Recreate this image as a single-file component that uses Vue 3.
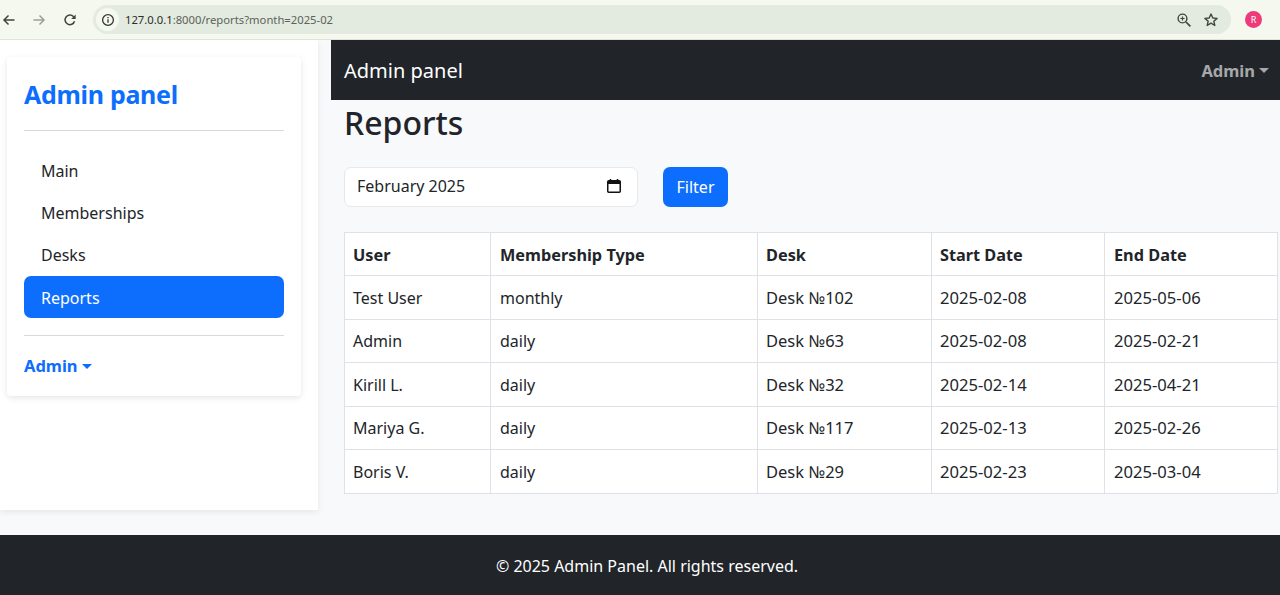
<script setup>
const links = ['Main', 'Memberships', 'Desks', 'Reports']
const rows = [
  ['Test User', 'monthly', 'Desk №102', '2025-02-08', '2025-05-06'],
  ['Admin', 'daily', 'Desk №63', '2025-02-08', '2025-02-21'],
  ['Kirill L.', 'daily', 'Desk №32', '2025-02-14', '2025-04-21'],
  ['Mariya G.', 'daily', 'Desk №117', '2025-02-13', '2025-02-26'],
  ['Boris V.', 'daily', 'Desk №29', '2025-02-23', '2025-03-04'],
]
const heads = ['User', 'Membership Type', 'Desk', 'Start Date', 'End Date']
</script>

<template>
  <div class="page">
    <header class="chrome">
      <svg class="nav-ic" width="14" height="14" viewBox="0 0 14 14"><path d="M12.500 7H2M6.500 2.500 2 7l4.500 4.500" fill="none" stroke="#3f4640" stroke-width="1.500"/></svg>
      <svg class="nav-ic fwd" width="14" height="14" viewBox="0 0 14 14"><path d="M1.500 7H12M7.500 2.500 12 7l-4.500 4.500" fill="none" stroke="#9aa09a" stroke-width="1.500"/></svg>
      <svg class="nav-ic reload" width="14" height="14" viewBox="0 0 14 14"><path d="M11.500 8.200A4.800 4.800 0 1 1 10.400 3.600L12 5.200" fill="none" stroke="#3f4640" stroke-width="1.500"/><path d="M12.600 1.500v4.400H8.200z" fill="#3f4640"/></svg>
      <div class="omnibox">
        <span class="info">
          <svg width="14" height="14" viewBox="0 0 14 14"><circle cx="7" cy="7" r="5.400" fill="none" stroke="#333" stroke-width="1.300"/><path d="M7 6.200v3.600M7 4v1.300" stroke="#333" stroke-width="1.300"/></svg>
        </span>
        <span class="url"><span class="host">127.0.0.1</span>:8000/reports?month=2025-02</span>
        <svg class="zoom-ic" width="16" height="16" viewBox="0 0 16 16"><circle cx="6.500" cy="6.500" r="4.400" fill="none" stroke="#3f4640" stroke-width="1.400"/><path d="M10 10l4.400 4.400" stroke="#3f4640" stroke-width="1.700"/><path d="M4.400 6.500h4.200M6.500 4.400v4.200" stroke="#3f4640" stroke-width="1.200"/></svg>
        <svg class="star-ic" width="16" height="16" viewBox="0 0 16 16"><path d="M8 2l1.800 4 4.300.4-3.300 2.800 1 4.300L8 11.200l-3.800 2.300 1-4.300-3.300-2.800L6.200 6z" fill="none" stroke="#3f4640" stroke-width="1.400" stroke-linejoin="round"/></svg>
      </div>
      <span class="avatar">R</span>
    </header>

    <div class="body">
      <aside class="sidebar">
        <div class="card">
          <h1 class="brand">Admin panel</h1>
          <hr class="rule" />
          <nav class="links">
            <a v-for="l in links" :key="l" class="link" :class="{ active: l === 'Reports' }">{{ l }}</a>
          </nav>
          <hr class="rule second" />
          <div class="user">Admin<i class="caret"></i></div>
        </div>
      </aside>

      <main class="main">
        <div class="topbar">
          <span class="topbrand">Admin panel</span>
          <span class="topuser">Admin<i class="caret"></i></span>
        </div>
        <div class="content">
          <h2 class="title">Reports</h2>
          <form class="filter" @submit.prevent>
            <div class="month">
              <input class="month-text" type="text" value="February 2025" />
              <svg class="cal" width="16" height="16" viewBox="0 0 16 16"><path d="M4.500 1v2M11.500 1v2" stroke="#111" stroke-width="1.500"/><rect x="1.750" y="2.750" width="12.500" height="11.500" rx="1" fill="none" stroke="#111" stroke-width="1.500"/><path d="M2 3h12v3H2z" fill="#111"/></svg>
            </div>
            <button class="btn" type="submit">Filter</button>
          </form>
          <table class="tbl">
            <colgroup><col /><col /><col /><col /><col /></colgroup>
            <thead>
              <tr><th v-for="h in heads" :key="h">{{ h }}</th></tr>
            </thead>
            <tbody>
              <tr v-for="r in rows" :key="r[0]"><td v-for="c in r" :key="c">{{ c }}</td></tr>
            </tbody>
          </table>
        </div>
      </main>
    </div>

    <footer class="footer">© 2025 Admin Panel. All rights reserved.</footer>
  </div>
</template>

<style>
html, body { margin: 0; background: #f8f9fa; }
</style>

<style scoped>
.page {
  width: 1280px;
  height: 595px;
  display: flex;
  flex-direction: column;
  overflow: hidden;
  font-family: "Noto Sans", "Open Sans", sans-serif;
  font-size: 16px;
  color: #212529;
  background: #f8f9fa;
}
.chrome {
  height: 39px;
  flex: none;
  display: flex;
  align-items: center;
  background: #f4f8ee;
  border-bottom: 1px solid #dfe3da;
  position: relative;
  z-index: 2;
}
.nav-ic { margin-left: 2px; flex: none; }
.nav-ic.fwd { margin-left: 16px; }
.nav-ic.reload { margin-left: 17px; }
.omnibox {
  margin-left: 16px;
  width: 1138px;
  height: 29px;
  border-radius: 15px;
  background: #e3eadf;
  display: flex;
  align-items: center;
}
.info {
  width: 23px;
  height: 23px;
  margin-left: 3px;
  border-radius: 50%;
  background: #f4f8ee;
  display: flex;
  align-items: center;
  justify-content: center;
}
.url { margin-left: 6px; font-size: 11.250px; color: #5c625c; flex: 1; }
.host { color: #2a2f2a; }
.zoom-ic { margin-right: 11px; }
.star-ic { margin-right: 12px; }
.avatar {
  margin-left: 14px;
  width: 17px;
  height: 17px;
  border-radius: 50%;
  background: #ee3a7a;
  color: #fff;
  font-size: 9px;
  display: flex;
  align-items: center;
  justify-content: center;
}
.body { flex: 1; display: flex; min-height: 0; }
.sidebar {
  width: 318px;
  height: 470px;
  flex: none;
  background: #fff;
  box-shadow: 0 2px 6px rgba(0, 0, 0, 0.08);
  padding: 17px 17px 0 7px;
  box-sizing: border-box;
}
.card {
  box-sizing: border-box;
  height: 339px;
  padding: 16px 17px 0;
  background: #fff;
  box-shadow: 0 2px 6px rgba(0, 0, 0, 0.1);
  border-radius: 4px;
}
.brand {
  margin: 0;
  color: #0d6efd;
  font-size: 25px;
  font-weight: 700;
  letter-spacing: -0.3px;
  line-height: 42px;
}
.rule { margin: 15px 0 0; border: 0; border-top: 1px solid #d9d9d9; }
.rule.second { margin-top: 17px; }
.links { margin-top: 17.500px; display: flex; flex-direction: column; }
.link {
  height: 42.400px;
  line-height: 44.500px;
  padding-left: 17px;
  border-radius: 7px;
  color: #212529;
}
.link.active { background: #0d6efd; color: #fff; height: 42px; }
.user {
  margin-top: 17.500px;
  color: #0d6efd;
  font-weight: 700;
  font-size: 16.500px;
  display: flex;
  align-items: center;
  line-height: 26px;
}
.caret {
  display: inline-block;
  margin-left: 4px;
  border-top: 5px solid currentColor;
  border-left: 5px solid transparent;
  border-right: 5px solid transparent;
}
.main { flex: 1; margin-left: 13px; min-width: 0; }
.topbar {
  height: 60px;
  background: #212529;
  display: flex;
  align-items: center;
  justify-content: space-between;
  padding: 1px 11px 0 13px;
  box-sizing: border-box;
}
.topbrand { color: #fff; font-size: 20px; }
.topuser { color: #a6a8aa; font-weight: 700; font-size: 16.500px; display: flex; align-items: center; }
.content { padding-left: 13px; }
.title { margin: 0; font-size: 32px; font-weight: 500; line-height: 46px; }
.filter { margin-top: 21px; display: flex; gap: 25px; align-items: flex-start; }
.month {
  box-sizing: border-box;
  width: 294px;
  height: 39.500px;
  border: 1px solid #e6e8eb;
  border-radius: 7px;
  background: #fff;
  padding: 0 15px 1px 12px;
  display: flex;
  align-items: center;
}
.month-text {
  flex: 1;
  min-width: 0;
  border: 0;
  padding: 0;
  outline: 0;
  background: transparent;
  font: inherit;
  color: #212529;
}
.btn {
  width: 65px;
  height: 39.500px;
  border: 0;
  border-radius: 7px;
  background: #0d6efd;
  color: #fff;
  font: inherit;
  padding: 0;
}
.tbl {
  margin-top: 25.500px;
  width: 933px;
  table-layout: fixed;
  border-collapse: collapse;
  background: #fff;
}
col:nth-child(1) { width: 146px; }
col:nth-child(2) { width: 267px; }
col:nth-child(3) { width: 174px; }
col:nth-child(4) { width: 173px; }
col:nth-child(5) { width: 173px; }
th, td {
  border: 1px solid #dee2e6;
  padding: 0 8px;
  box-sizing: border-box;
  text-align: left;
  white-space: nowrap;
  overflow: hidden;
}
th { font-weight: 700; height: 43px; font-size: 16.300px; padding-top: 1px; }
td { height: 43.500px; }
td:nth-child(-n+2) { padding-top: 1px; }
th:nth-child(2), td:nth-child(2), th:nth-child(5), td:nth-child(5) { padding-left: 9px; }
td:nth-child(3) { font-size: 16.500px; }
td:nth-child(4), td:nth-child(5) { font-size: 16.600px; }
.footer {
  height: 60px;
  flex: none;
  box-sizing: border-box;
  background: #212529;
  color: #fff;
  display: flex;
  align-items: center;
  justify-content: center;
  padding: 1px 0 0 14px;
}
</style>
